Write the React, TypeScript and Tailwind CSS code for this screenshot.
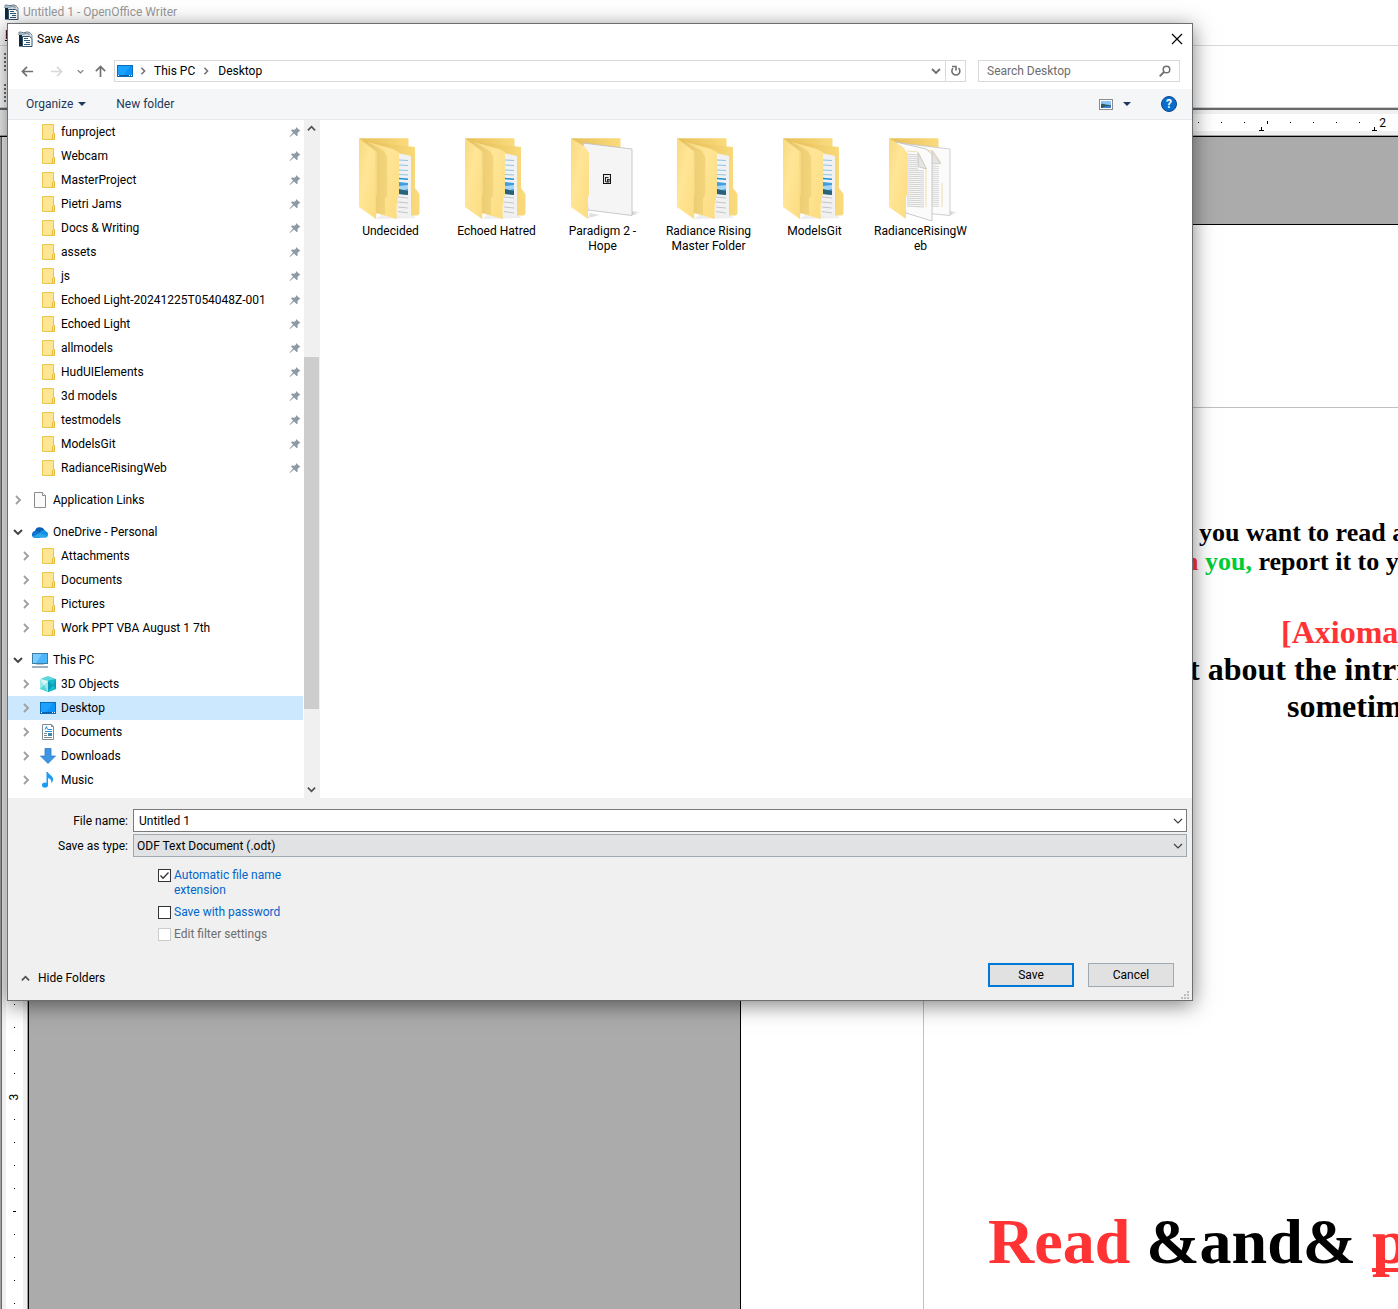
import React from "react";

type IconProps = { className?: string };

/* ---------- small glyphs ---------- */

function Chevron({ dir, className = "" }: { dir: "up" | "down" | "right"; className?: string }) {
  const d = { up: "M1 7 5 3l4 4", down: "M1 3l4 4 4-4", right: "M3 1l4 4-4 4" }[dir];
  return (
    <svg viewBox="0 0 10 10" className={className} fill="none" stroke="currentColor" strokeWidth="1.9" aria-hidden="true">
      <path d={d} />
    </svg>
  );
}

function ThinChevron({ className = "" }: IconProps) {
  return (
    <svg viewBox="0 0 10 10" className={className} fill="none" stroke="currentColor" strokeWidth="1.2" aria-hidden="true">
      <path d="M1 3l4 4 4-4" />
    </svg>
  );
}

function Arrow({ dir, className = "" }: { dir: "left" | "right" | "up"; className?: string }) {
  const d = {
    left: "M13 7H1.500M6.500 2 1.500 7l5 5",
    right: "M1 7h11.500M7.500 2l5 5-5 5",
    up: "M7 13V1.500M2 6.500l5-5 5 5",
  }[dir];
  return (
    <svg viewBox="0 0 14 14" className={className} fill="none" stroke="currentColor" strokeWidth="1.800" aria-hidden="true">
      <path d={d} />
    </svg>
  );
}

function Caret({ className = "" }: IconProps) {
  return (
    <svg viewBox="0 0 8 4" className={className} aria-hidden="true">
      <path d="M0 0h8L4 4z" fill="#1e395b" />
    </svg>
  );
}

function WriterIcon({ className = "" }: IconProps) {
  return (
    <svg viewBox="0 0 16 16" className={className} aria-hidden="true">
      <path d="M2 1h11l2 2v12.500H2z" fill="#d5dde3" />
      <path d="M2 4h3v11.500H2z" fill="#10283e" />
      <path d="M1.500 1.500C4 0 5.500 2.500 8 1.500S11.500 1 13 2" stroke="#5c7487" fill="none" strokeWidth="1" />
      <path d="M1 3.500c2-1.500 4 .500 6-.500s4-.500 5.500 1" stroke="#7f95a5" fill="none" strokeWidth="1.200" />
      <path d="M5.500 5.500h7l2.500 2v8H5.500z" fill="#fff" stroke="#33506a" strokeWidth="1" />
      <path d="M12.500 1.500 15 4v3.500" stroke="#7f95a5" fill="none" strokeWidth="1" />
      <path d="M7 7.500h4M7 9.500h6M9 11.500h4M7 13.500h6" stroke="#2d5878" strokeWidth="1" />
    </svg>
  );
}

function DesktopIcon({ className = "" }: IconProps) {
  return (
    <svg viewBox="0 0 16 12" className={className} aria-hidden="true">
      <rect x=".5" y=".5" width="15" height="11" fill="#1ba1ff" stroke="#0a6cbd" />
      <path d="M6 11 13 1h2v10z" fill="#0b93f5" />
      <path d="M1 10.500h14" stroke="#0a5fa8" />
      <path d="M1 10.500h1M12 10.500h1M14 10.500h1" stroke="#fff" />
    </svg>
  );
}

function SmallFolder({ className = "" }: IconProps) {
  return (
    <svg viewBox="0 0 16 16" className={className} aria-hidden="true">
      <path d="M2.500.500h11v15h-11z" fill="#ffe694" stroke="#ebc54a" />
      <path d="M12.500 15.500v-5l1-1h1v6z" fill="#ffe694" stroke="#e3b93c" />
    </svg>
  );
}

function PageIcon({ className = "" }: IconProps) {
  return (
    <svg viewBox="0 0 16 16" className={className} aria-hidden="true">
      <path d="M2.500.500h8l3 3v12h-11z" fill="#fafafa" stroke="#8a8a8a" />
      <path d="M10.500.500v3h3" fill="#fff" stroke="#8a8a8a" />
    </svg>
  );
}

function CloudIcon({ className = "" }: IconProps) {
  return (
    <svg viewBox="0 0 16 16" className={className} aria-hidden="true">
      <path d="M3 7a5 4.500 0 0 1 9.500-1L9 11 2 9z" fill="#0a5db5" />
      <path d="M0 10a3.500 3.500 0 0 1 5-3l6 3-3 4H3a3.500 3.500 0 0 1-3-4z" fill="#1174d4" />
      <path d="M7.500 9c1-3 5-4 6.500-1.500 2.500.500 2.500 4 1 5.500z" fill="#1490df" />
      <path d="M1 12.500 8 9l7.500 3.500c-.500 1-1.500 1.300-2.500 1.300H4c-1.300 0-2.300-.300-3-1.300z" fill="#28a8ea" />
    </svg>
  );
}

function PcIcon({ className = "" }: IconProps) {
  return (
    <svg viewBox="0 0 16 16" className={className} aria-hidden="true">
      <rect x=".5" y="1.500" width="15" height="10" fill="#4db5fb" stroke="#3a7fa8" />
      <path d="M1 2h9L4 11H1z" fill="#7ccbff" />
      <path d="M4 12.500h8" stroke="#b7c7d3" />
      <path d="M0 15h16" stroke="#8296a8" strokeWidth="1.500" />
    </svg>
  );
}

function CubeIcon({ className = "" }: IconProps) {
  return (
    <svg viewBox="0 0 16 16" className={className} aria-hidden="true">
      <path d="M0 3 8 0l8 3-8 3z" fill="#5fd5dd" />
      <path d="M0 3l8 2v11l-8-3z" fill="#9be9e8" />
      <path d="M16 3 8 5v11l8-3z" fill="#0a9fb8" />
      <path d="M0 13l4-4 4 7z" fill="#5cd3d8" />
      <path d="M0 3l8 2-4 4z" fill="#d9f8f5" />
      <path d="M8 5l5 4 3-6zM8 16l5-7 3 4z" fill="#16bccd" />
    </svg>
  );
}

function DocumentsIcon({ className = "" }: IconProps) {
  return (
    <svg viewBox="0 0 16 16" className={className} aria-hidden="true">
      <path d="M2.500.500h9l2 2v13h-11z" fill="#fff" stroke="#7f8a91" />
      <path d="M11.500.500v2h2" fill="none" stroke="#7f8a91" />
      <path d="M5 5.500l1.500-3 1 3M8 5.500h4M5 7.500h7" stroke="#2290dc" fill="none" />
      <path d="M4 9.500h3M4 11.500h3M4 13.500h8" stroke="#7b868d" />
      <path d="M8 9h4v3H8z" fill="#3e88ae" />
    </svg>
  );
}

function DownloadIcon({ className = "" }: IconProps) {
  return (
    <svg viewBox="0 0 16 16" className={className} aria-hidden="true">
      <path d="M5 .500h6v7.500h4.500L8 15.500.500 8H5z" fill="#3c96e4" stroke="#2f7fca" strokeWidth=".8" />
    </svg>
  );
}

function MusicIcon({ className = "" }: IconProps) {
  return (
    <svg viewBox="0 0 16 16" className={className} aria-hidden="true">
      <ellipse cx="5" cy="13" rx="3" ry="2.600" fill="#1a9bf5" />
      <path d="M6.500 0H8c.3 2.500 4.500 3.500 5 6.500.2 2-.500 3.500-1.800 5C12 8 10 6.700 8 6v7H6.500z" fill="#1a9bf5" />
    </svg>
  );
}

function PinIcon({ className = "" }: IconProps) {
  return (
    <svg viewBox="0 0 12 12" className={className} aria-hidden="true">
      <path d="M7 1l4.500 4-1.500.500L8.500 7l.3 2.500L7.500 10 5 7.500 1 11 .500 10.500 4 6.700 2 4.500 3 3.500l2.500.2L7 2.500z" fill="#8d9ba6" />
    </svg>
  );
}

function SearchIcon({ className = "" }: IconProps) {
  return (
    <svg viewBox="0 0 12 12" className={className} fill="none" stroke="#707070" aria-hidden="true">
      <circle cx="7.500" cy="4.500" r="3.300" strokeWidth="1.500" />
      <path d="M5 7 .700 11.300" strokeWidth="1.900" />
    </svg>
  );
}

function RefreshIcon({ className = "" }: IconProps) {
  return (
    <svg viewBox="0 0 12 12" className={className} fill="none" stroke="#707070" strokeWidth="1.600" aria-hidden="true">
      <path d="M3 3.200a4 4 0 1 0 5.500-.200" />
      <path d="M2 1.500h4v4" />
    </svg>
  );
}

function ViewIcon({ className = "" }: IconProps) {
  return (
    <svg viewBox="0 0 14 11" className={className} aria-hidden="true">
      <rect x=".5" y=".5" width="13" height="10" fill="#fff" stroke="#8c8c8c" />
      <path d="M2 2h10v7H2z" fill="#8cc4f8" />
      <path d="M2 5c3-1 5 1.500 10 1v3H2z" fill="#2c5f63" />
      <path d="M4 8l8-1.500V9H4z" fill="#3e7fd0" />
    </svg>
  );
}

/* ---------- large folder drawings ---------- */

function FolderDefs() {
  return (
    <svg className="absolute size-0" aria-hidden="true">
      <defs>
        <linearGradient id="cover" x1="0" y1="0" x2="1" y2="1">
          <stop offset="0" stopColor="#f8da80" />
          <stop offset=".4" stopColor="#ffe596" />
          <stop offset="1" stopColor="#fbdc80" />
        </linearGradient>
        <linearGradient id="back" x1="0" y1="0" x2="1" y2="0">
          <stop offset="0" stopColor="#e6bf5a" />
          <stop offset="1" stopColor="#fadb7c" />
        </linearGradient>
        <linearGradient id="shade" x1="0" y1="0" x2="1" y2="0">
          <stop offset="0" stopColor="#e8c86c" />
          <stop offset="1" stopColor="#f3d57d" />
        </linearGradient>
        <linearGradient id="floor" x1="0" y1="0" x2="1" y2="0">
          <stop offset="0" stopColor="#c8c8c8" />
          <stop offset="1" stopColor="#fff" />
        </linearGradient>
      </defs>
    </svg>
  );
}

function NestedFolderIcon() {
  return (
    <svg viewBox="0 0 72 84" className="h-[84px] w-[72px]" aria-hidden="true">
      <path d="M18 82l6-5 30 1 4 3z" fill="#eeeeee" />
      <path d="M1 1.300h49.500v12H12z" fill="url(#back)" />
      <path d="M10 5l47 5v41l4.500 6v20l-2 1.500H53L40 70z" fill="url(#back)" />
      <path d="M40 16l13 3v62l-14-3z" fill="#f1f1f1" />
      <path d="M41 23l9 .500M41 28l9 .500M41 33l9 .500M41 37.500l9 .500" stroke="#8cc5e8" strokeWidth="1" />
      <path d="M41 41.500l9 .7" stroke="#1d8fd6" strokeWidth="1.500" />
      <path d="M41 45l9 1v12l-9-1z" fill="#3f9fe0" />
      <path d="M41 49l9-1v4l-9 2z" fill="#a9d7f3" />
      <path d="M41 52l9 2v4l-9-1z" fill="#2b6278" />
      <path d="M40 60l10 1M40 65l10 1M40 70l10 1M40 74.500l10 1.500" stroke="#c2c6c9" strokeWidth="1" />
      <path d="M10 5l25 7 6 3v43l-2.300 3v21L17.700 76z" fill="url(#cover)" />
      <path d="M10 5l16 9 3.300 6v38L27 62v16l-9.300-2z" fill="url(#shade)" />
      <path d="M1 1.300 18.700 15v43l-.7 1v23L1 70z" fill="url(#cover)" />
      <path d="M17.700 15v67" stroke="#f5d985" strokeWidth=".7" />
    </svg>
  );
}

function SheetFolderIcon() {
  return (
    <svg viewBox="0 0 72 84" className="h-[84px] w-[72px]" aria-hidden="true">
      <path d="M60 78l1-4 10 1-7 3z" fill="url(#floor)" />
      <path d="M18 81l2-5 10 2z" fill="#e0e0e0" />
      <path d="M1 1.300h49.500v12H12z" fill="url(#back)" />
      <path d="M13 6l49 6v66.500L18 73z" fill="#f5f5f5" stroke="#bdbdbd" strokeWidth=".8" />
      <rect x="33.500" y="37.500" width="7" height="9" fill="#e9e9e9" stroke="#111" strokeWidth="1" />
      <path d="M35.500 40v5M35.500 40.500h3M37.500 42v3M39 42v3M37.500 42.500h2M36 45h3" stroke="#111" strokeWidth=".9" />
      <path d="M1 1.300 15 10l4 6v42l-1 2v22L1 70z" fill="url(#cover)" />
    </svg>
  );
}

function PapersFolderIcon() {
  return (
    <svg viewBox="0 0 72 84" className="h-[84px] w-[72px]" aria-hidden="true">
      <path d="M60 78l1-4 9 1-7 3z" fill="url(#floor)" />
      <path d="M1 1.300h49.500v12H12z" fill="url(#back)" />
      <path d="M12 6l50 6v66.500L36 76z" fill="#fbfbfb" stroke="#c4c4c4" strokeWidth=".8" />
      <path d="M28 12l17 2 8 12M54 46v24" stroke="#ecd79a" fill="none" strokeWidth=".8" />
      <path d="M44 14l-.500 13 9-.500z" fill="#e4e4e4" stroke="#b8b8b8" strokeWidth=".6" />
      {Array.from({ length: 21 }, (_, i) => (
        <path key={i} d={`M44 ${29 + i * 2}l7 .5`} stroke="#d2d2d2" strokeWidth=".9" />
      ))}
      <path d="M8 5l30 7 6 5v67l-26-8z" fill="#fbfbfb" stroke="#bdbdbd" strokeWidth=".8" />
      <path d="M19 14l11 1 8 16v39" stroke="#ecd79a" fill="none" strokeWidth=".8" />
      {Array.from({ length: 27 }, (_, i) => (
        <path key={i} d={`M19 ${17 + i * 2}l${i < 8 ? 11 : 17} 1`} stroke="#cccccc" strokeWidth=".9" />
      ))}
      <path d="M30 16l.500 14 8 2z" fill="#e4e4e4" stroke="#b8b8b8" strokeWidth=".6" />
      <path d="M1 1.300 15 10l4 6v42l-1 2v22L1 70z" fill="url(#cover)" />
    </svg>
  );
}

/* ---------- data ---------- */

const pinned = [
  "funproject",
  "Webcam",
  "MasterProject",
  "Pietri Jams",
  "Docs & Writing",
  "assets",
  "js",
  "Echoed Light-20241225T054048Z-001",
  "Echoed Light",
  "allmodels",
  "HudUIElements",
  "3d models",
  "testmodels",
  "ModelsGit",
  "RadianceRisingWeb",
];

type Node = { name: string; Icon: React.ComponentType<IconProps>; selected?: boolean };

const oneDrive: Node[] = ["Attachments", "Documents", "Pictures", "Work PPT VBA August 1 7th"].map((name) => ({
  name,
  Icon: SmallFolder,
}));

const thisPc: Node[] = [
  { name: "3D Objects", Icon: CubeIcon },
  { name: "Desktop", Icon: DesktopIcon, selected: true },
  { name: "Documents", Icon: DocumentsIcon },
  { name: "Downloads", Icon: DownloadIcon },
  { name: "Music", Icon: MusicIcon },
];

const files = [
  { lines: ["Undecided"], Icon: NestedFolderIcon },
  { lines: ["Echoed Hatred"], Icon: NestedFolderIcon },
  { lines: ["Paradigm 2 -", "Hope"], Icon: SheetFolderIcon },
  { lines: ["Radiance Rising", "Master Folder"], Icon: NestedFolderIcon },
  { lines: ["ModelsGit"], Icon: NestedFolderIcon },
  { lines: ["RadianceRisingW", "eb"], Icon: PapersFolderIcon },
];

/* ---------- dialog parts ---------- */

function ChildRow({ node }: { node: Node }) {
  return (
    <li>
      <button
        className={`flex h-6 w-full items-center pl-[13px] text-left ${node.selected ? "bg-[#cce8ff]" : ""}`}
      >
        <Chevron dir="right" className="size-[10px] text-[#a0a0a0]" />
        <node.Icon className="ml-[9px] w-4" />
        <span className="ml-[5px]">{node.name}</span>
      </button>
    </li>
  );
}

function RootRow({ name, Icon, open }: { name: string; Icon: React.ComponentType<IconProps>; open?: boolean }) {
  return (
    <button className="mt-2 flex h-6 w-full items-center pl-[5px] text-left">
      <Chevron dir={open ? "down" : "right"} className={`size-[10px] ${open ? "text-[#404040]" : "text-[#a0a0a0]"}`} />
      <Icon className="ml-[9px] w-4" />
      <span className="ml-[5px]">{name}</span>
    </button>
  );
}

function Sidebar() {
  return (
    <div className="flex w-[312px] shrink-0">
      <nav className="min-w-0 flex-1 whitespace-nowrap pb-[6px]" aria-label="Folders">
        <ul>
          {pinned.map((name) => (
            <li key={name}>
              <button className="flex h-6 w-full items-center pl-8 pr-[2px] text-left">
                <SmallFolder className="w-4" />
                <span className="ml-[5px] flex-1">{name}</span>
                <PinIcon className="size-3" />
              </button>
            </li>
          ))}
        </ul>
        <RootRow name="Application Links" Icon={PageIcon} />
        <RootRow name="OneDrive - Personal" Icon={CloudIcon} open />
        <ul>{oneDrive.map((n) => <ChildRow key={n.name} node={n} />)}</ul>
        <RootRow name="This PC" Icon={PcIcon} open />
        <ul>{thisPc.map((n) => <ChildRow key={n.name} node={n} />)}</ul>
      </nav>
      <div className="ml-px flex w-4 flex-col items-center bg-[#f0f0f0] pr-px text-[#505050]">
        <button className="flex h-[17px] items-center" aria-label="Scroll up">
          <Chevron dir="up" className="size-[9px]" />
        </button>
        <div className="mt-[220px] h-[352px] w-full bg-[#cdcdcd]" />
        <button className="mt-auto flex h-[17px] items-center" aria-label="Scroll down">
          <Chevron dir="down" className="size-[9px]" />
        </button>
      </div>
    </div>
  );
}

function CheckRow({ id, label, checked, disabled }: { id: string; label: string; checked?: boolean; disabled?: boolean }) {
  return (
    <div className="flex w-[140px] items-start gap-[3px]">
      <span className="grid pt-[1px]">
        <input
          id={id}
          type="checkbox"
          defaultChecked={checked}
          disabled={disabled}
          className="peer col-start-1 row-start-1 size-[13px] appearance-none border border-[#333333] bg-white disabled:border-[#cccccc]"
        />
        <svg
          viewBox="0 0 13 13"
          className="pointer-events-none invisible col-start-1 row-start-1 size-[13px] peer-checked:visible"
          fill="none"
          stroke="#333"
          strokeWidth="1.300"
          aria-hidden="true"
        >
          <path d="M2.500 6.500 5 9.200l5.500-5.700" />
        </svg>
      </span>
      <label htmlFor={id} className={disabled ? "text-[#6d6d6d]" : "text-[#0066cc]"}>
        {label}
      </label>
    </div>
  );
}

function SaveDialog() {
  return (
    <section
      role="dialog"
      aria-label="Save As"
      className="absolute left-[7px] right-[205px] top-[23px] border border-[#6e6e6e] bg-white shadow-[0_4px_20px_rgba(0,0,0,0.5)]"
    >
      <header className="flex h-[29px] items-center pl-[9px] pr-[9px]">
        <WriterIcon className="size-4" />
        <h1 className="ml-1 flex-1">Save As</h1>
        <button aria-label="Close">
          <svg viewBox="0 0 12 12" className="size-3" stroke="#000" strokeWidth="1.200" aria-hidden="true">
            <path d="M1 1l10 10M11 1 1 11" />
          </svg>
        </button>
      </header>

      <div className="flex h-9 items-center pl-[13px] pr-3">
        <button aria-label="Back"><Arrow dir="left" className="size-[13px] text-[#707070]" /></button>
        <button aria-label="Forward" className="ml-4"><Arrow dir="right" className="size-[13px] text-[#d8d8d8]" /></button>
        <button aria-label="Recent locations" className="ml-[14px]"><Chevron dir="down" className="size-[7px] text-[#808080]" /></button>
        <button aria-label="Up" className="ml-[10px]"><Arrow dir="up" className="size-[13px] text-[#707070]" /></button>
        <div className="ml-[7px] flex h-[22px] flex-1 items-center border border-[#d9d9d9] pl-[2px]">
          <DesktopIcon className="w-4" />
          <Chevron dir="right" className="ml-[6px] size-2 text-[#707070]" />
          <button className="ml-[7px]">This PC</button>
          <Chevron dir="right" className="ml-[7px] size-2 text-[#707070]" />
          <button className="ml-2">Desktop</button>
          <button aria-label="Previous locations" className="ml-auto mr-1">
            <Chevron dir="down" className="size-[10px] text-[#707070]" />
          </button>
          <button aria-label="Refresh" className="flex h-full w-5 items-center justify-center border-l border-[#d9d9d9]">
            <RefreshIcon className="size-3" />
          </button>
        </div>
        <div className="ml-3 flex h-[22px] w-[202px] items-center border border-[#d9d9d9] pl-2 pr-2">
          <input
            aria-label="Search Desktop"
            placeholder="Search Desktop"
            className="min-w-0 flex-1 outline-none placeholder:text-[#6d6d6d]"
          />
          <SearchIcon className="size-3" />
        </div>
      </div>

      <div className="flex h-[31px] items-center border-b border-[#e5e7ea] bg-[#f5f6f7] pl-[18px] pr-[15px] text-[#1e395b]">
        <button className="flex items-center gap-[5px]">
          Organize <Caret className="h-1 w-2" />
        </button>
        <button className="ml-[30px] flex-1 text-left">New folder</button>
        <button aria-label="Change view"><ViewIcon className="h-[11px] w-[14px]" /></button>
        <button aria-label="View options" className="ml-[10px]"><Caret className="h-1 w-2" /></button>
        <button
          aria-label="Help"
          className="ml-[30px] flex size-4 items-center justify-center rounded-full border border-[#0b4a8a] bg-[#0a6ccc] font-bold text-white"
        >
          ?
        </button>
      </div>

      <div className="flex">
        <Sidebar />
        <ul className="flex flex-1 flex-wrap content-start pl-[17px] pt-[17px]">
          {files.map(({ lines, Icon }) => (
            <li key={lines[0]} className="flex w-[106px] flex-col items-center text-center">
              <div className="pl-[8px]"><Icon /></div>
              <p className="mt-[3px] pl-px leading-[15px]">
                {lines.map((line) => (
                  <span key={line} className="block whitespace-nowrap">{line}</span>
                ))}
              </p>
            </li>
          ))}
        </ul>
      </div>

      <div className="bg-[#f0f0f0] pt-[11px]">
        <div className="grid grid-cols-[120px_1fr] items-center gap-x-[5px] gap-y-[2px] pr-[5px]">
          <label htmlFor="file-name" className="text-right">File name:</label>
          <div className="flex h-[23px] items-center border border-[#7a7a7a] bg-white pl-[5px] pr-[3px]">
            <input id="file-name" defaultValue="Untitled 1" className="min-w-0 flex-1 outline-none" />
            <button aria-label="Show file names"><ThinChevron className="size-[10px] text-[#404040]" /></button>
          </div>
          <label htmlFor="file-type" className="text-right">Save as type:</label>
          <div className="grid h-[23px] items-center border border-[#a0a8b0] bg-[#e1e2e3] pl-[3px] pr-[3px]">
            <select id="file-type" className="col-start-1 row-start-1 appearance-none outline-none">
              <option>ODF Text Document (.odt)</option>
            </select>
            <ThinChevron className="pointer-events-none col-start-1 row-start-1 size-[10px] justify-self-end text-[#404040]" />
          </div>
        </div>
        <div className="flex flex-col gap-[7px] pl-[150px] pt-[11px] leading-[15px]">
          <CheckRow id="auto-ext" label="Automatic file name extension" checked />
          <CheckRow id="password" label="Save with password" />
          <CheckRow id="filter" label="Edit filter settings" disabled />
        </div>
        <footer className="flex pb-px pl-[13px] pr-[3px] pt-[21px]">
          <button className="mt-[7px] flex h-4 items-center gap-2 self-start">
            <Chevron dir="up" className="size-[9px] text-[#505050]" /> Hide Folders
          </button>
          <button className="ml-auto h-6 w-[86px] border-2 border-[#0078d7] bg-[#e1e1e1]">Save</button>
          <button className="ml-[14px] h-6 w-[86px] border border-[#a0a8b0] bg-[#e1e1e1]">Cancel</button>
          <svg viewBox="0 0 8 8" className="ml-[7px] mt-7 size-2" fill="#bdbdbd" aria-hidden="true">
            <path d="M6 0h2v2H6zM3 3h2v2H3zM6 3h2v2H6zM0 6h2v2H0zM3 6h2v2H3zM6 6h2v2H6z" />
          </svg>
        </footer>
      </div>
    </section>
  );
}

/* ---------- writer window ---------- */

function HorizontalRuler() {
  return (
    <div className="h-[27px] overflow-hidden border-b border-black bg-[#f0f0f0] pl-[37px] pt-1">
      <div className="grid h-[17px] bg-white">
        <div className="col-start-1 row-start-1 flex w-0 items-center">
          {Array.from({ length: 59 }, (_, i) => {
            const k = i - 38;
            return (
              <span key={k} className="flex w-[23px] shrink-0 justify-center">
                {k % 10 === 0 ? (
                  <span>{Math.abs(k / 10)}</span>
                ) : (
                  <span className={k % 5 === 0 ? "h-[3px] w-px bg-black" : "size-px bg-black"} />
                )}
              </span>
            );
          })}
        </div>
        <div className="col-start-1 row-start-1 flex w-0 items-end pl-[829px]">
          {Array.from({ length: 5 }, (_, i) => (
            <span key={i} className="flex w-[113px] shrink-0 flex-col items-center">
              <span className="h-[3px] w-px bg-black" />
              <span className="h-px w-[5px] bg-black" />
            </span>
          ))}
        </div>
      </div>
      <div className="-ml-[37px] mt-1 h-px bg-[#a0a0a0]" />
    </div>
  );
}

function VerticalRuler() {
  return (
    <div className="relative w-[29px] shrink-0 border-r border-black bg-[#f0f0f0]">
      <div className="absolute inset-y-0 left-0 flex w-7 overflow-hidden border-l border-[#a0a0a0]">
        <div className="mr-1 w-px bg-[#696969]" />
        <div className="flex w-[17px] flex-col items-center bg-white pt-[5px]">
          {Array.from({ length: 51 }, (_, i) => {
            const k = i - 11;
            return (
              <span key={k} className="flex h-[23px] shrink-0 items-center justify-center">
                {k % 10 === 0 ? (
                  <span className="-rotate-90">{Math.abs(k / 10)}</span>
                ) : (
                  <span className={k % 5 === 0 ? "h-px w-[3px] bg-black" : "size-px bg-black"} />
                )}
              </span>
            );
          })}
        </div>
        <div className="ml-auto w-px bg-[#a0a0a0]" />
      </div>
    </div>
  );
}

function Grip() {
  return (
    <div className="flex h-[31px] flex-col justify-center gap-[2px] pl-1">
      {Array.from({ length: 5 }, (_, i) => (
        <span key={i} className="size-[2px] bg-[#707070]" />
      ))}
    </div>
  );
}

function Page() {
  return (
    <div className="min-w-0 flex-1 overflow-hidden bg-[#ababab] pl-[711px] pt-[87px]">
      <div className="h-full border-l border-t border-black bg-white pl-[182px] pt-[182px]">
        <article className="h-full overflow-hidden whitespace-nowrap border-l border-t border-[#c0c0c0] pt-[110px] font-['Liberation_Serif',serif] font-bold">
          <p className="pl-[257px] text-[26px] leading-[29px]">
            <span className="text-[#0084d1]">e</span> you want to read a
          </p>
          <p className="pl-[260px] text-[26px] leading-[29px]">
            <span className="text-[#ff3333]">n</span> <span className="text-[#00cc33]">you,</span> report it to yo
          </p>
          <p className="mt-[38px] pl-[357px] text-[32px] leading-[37px] text-[#ff3333]">[Axiomat</p>
          <p className="pl-[265px] text-[32px] leading-[37px]">t about the intri</p>
          <p className="pl-[363px] text-[32px] leading-[37px]">sometim</p>
          <p className="mt-[480px] pl-[64px] text-[64px] leading-[74px]">
            <span className="text-[#ff3333]">Read</span> &amp;and&amp;{" "}
            <span className="text-[#ff3333] underline decoration-[4px] underline-offset-[5px] [text-decoration-skip-ink:none]">p</span>
          </p>
        </article>
      </div>
    </div>
  );
}

export default function App() {
  return (
    <main className="relative flex h-screen min-h-[1010px] flex-col overflow-hidden bg-white font-['Roboto',sans-serif] text-[12px] leading-4 text-black">
      <FolderDefs />
      <div className="flex h-6 items-center pl-[3px] text-[#999999]">
        <WriterIcon className="size-4" />
        <span className="ml-1">Untitled 1 - OpenOffice Writer</span>
      </div>
      <div className="flex h-[22px] items-center border-b border-[#d9d9d9] pl-[5px]">
        <span><u>F</u>ile</span>
      </div>
      <div className="h-[61px]">
        <Grip />
        <Grip />
      </div>
      <div className="h-[3px] shrink-0 border-b-2 border-t border-b-[#696969] border-t-[#d0d0d0]" />
      <HorizontalRuler />
      <div className="flex min-h-0 flex-1">
        <VerticalRuler />
        <Page />
      </div>
      <SaveDialog />
    </main>
  );
}
